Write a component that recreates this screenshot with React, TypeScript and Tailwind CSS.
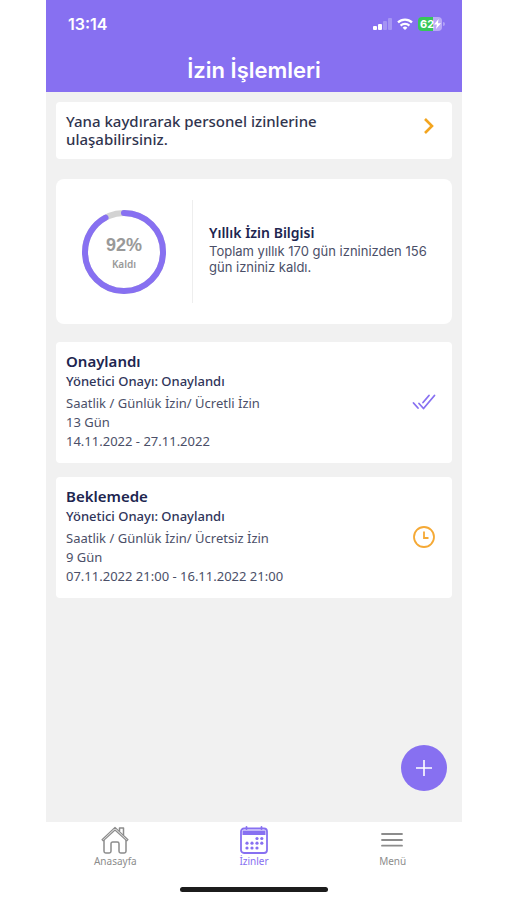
import React from 'react';

interface Leave {
  id: number;
  status: string;
  approval: string;
  type: string;
  duration: string;
  dates: string;
  approved: boolean;
}

const leaves: Leave[] = [
  {
    id: 1,
    status: 'Onaylandı',
    approval: 'Yönetici Onayı: Onaylandı',
    type: 'Saatlik / Günlük İzin/ Ücretli İzin',
    duration: '13 Gün',
    dates: '14.11.2022 - 27.11.2022',
    approved: true,
  },
  {
    id: 2,
    status: 'Beklemede',
    approval: 'Yönetici Onayı: Onaylandı',
    type: 'Saatlik / Günlük İzin/ Ücretsiz İzin',
    duration: '9 Gün',
    dates: '07.11.2022 21:00 - 16.11.2022 21:00',
    approved: false,
  },
];

const StatusBar = () => (
  <div className="flex items-center justify-between pl-[22px] pr-[17px] pt-[14px]">
    <span className="text-base leading-5 font-semibold">13:14</span>
    <div className="flex items-center gap-[5px]">
      <svg width="19" height="12" viewBox="0 0 19 12" fill="#fff">
        <rect x="0" y="8" width="4" height="4" rx="1" />
        <rect x="5" y="6" width="4" height="6" rx="1" />
        <rect x="10" y="3" width="4" height="9" rx="1" opacity="0.25" />
        <rect x="15" y="0" width="4" height="12" rx="1" opacity="0.25" />
      </svg>
      <svg width="16" height="12" viewBox="0 0 16 12" fill="none" stroke="#fff" strokeWidth="2.2">
        <path d="M1 4.4a10 10 0 0 1 14 0" />
        <path d="M3.6 7.6a6.3 6.3 0 0 1 8.8 0" />
        <path d="M8 12 5.6 9.7a3.4 3.4 0 0 1 4.8 0Z" fill="#fff" stroke="none" />
      </svg>
      <div className="flex items-center gap-px">
        <div className="flex h-[14px] w-6 items-center overflow-hidden rounded-[4px] bg-[linear-gradient(90deg,#36c759_62%,#b9a9f7_62%)] pl-[2px]">
          <span className="text-[11px] leading-[14px] font-bold">62</span>
          <svg width="7" height="10" viewBox="0 0 7 10" fill="#fff">
            <path d="M4.6 0 0 5.6h2.9L2 10l5-5.8H3.9Z" />
          </svg>
        </div>
        <span className="h-1 w-[2px] rounded-r bg-white/35" />
      </div>
    </div>
  </div>
);

const BalanceRing = ({ percent }: { percent: number }) => {
  const r = 39;
  const length = 2 * Math.PI * r;
  return (
    <div className="relative size-[86px]">
      <svg width="86" height="86" viewBox="0 0 86 86" fill="none" strokeWidth="6">
        <circle cx="43" cy="43" r={r} stroke="#d3d3d3" />
        <circle
          cx="43"
          cy="43"
          r={r}
          stroke="#8770f1"
          strokeLinecap="round"
          strokeDasharray={`${(length * percent) / 100} ${length}`}
          transform="rotate(-90 43 43)"
        />
      </svg>
      <div className="absolute inset-0 flex flex-col items-center justify-center pt-[2px] text-[#999]">
        <span className="font-['Liberation_Sans',sans-serif] text-lg leading-[22px] font-bold">{percent}%</span>
        <span className="text-[10px] leading-4 font-semibold">Kaldı</span>
      </div>
    </div>
  );
};

const DoubleCheckIcon = () => (
  <svg width="24" height="24" viewBox="0 0 24 24" fill="none" stroke="#8770f1" strokeWidth="1.8" strokeLinecap="round" strokeLinejoin="round">
    <path d="M7 13.5 11.5 18.5 22.5 5.5" />
    <path d="M11 12.5 17 5.5" />
    <path d="M1.5 13 6 18" />
  </svg>
);

const ClockIcon = () => (
  <svg width="24" height="24" viewBox="0 0 24 24" fill="none" stroke="#f5a935" strokeWidth="1.8">
    <circle cx="12" cy="12" r="10" />
    <path d="M12 6.5V13h4.5" />
  </svg>
);

const HomeIcon = () => (
  <svg width="28" height="28" viewBox="0 0 28 28" fill="none" stroke="#8c8c8c" strokeWidth="1.5" strokeLinejoin="round" strokeLinecap="round">
    <path d="M3 14.5v10.8c0 1 .7 1.7 1.7 1.7h3.6c1 0 1.7-.7 1.7-1.7v-7.6c0-1 .7-1.7 1.7-1.7h4.6c1 0 1.7.7 1.7 1.7v7.6c0 1 .7 1.7 1.7 1.7h3.6c1 0 1.7-.7 1.7-1.7V14.5" />
    <path d="M1 13.7 14 1.4l13 12.3-1.2 1.2L14 4 2.2 14.9Z" strokeWidth="1.2" />
    <path d="M18.5 5V2h4v7" />
  </svg>
);

const CalendarIcon = () => (
  <svg width="28" height="28" viewBox="0 0 28 28" fill="none" stroke="#8770f1" strokeWidth="1.8">
    <rect x="1" y="2.5" width="26" height="24.5" rx="3" />
    <path d="M6.5 1v2M21.5 1v2" strokeLinecap="round" />
    <rect x="2.5" y="4.5" width="23" height="4.5" fill="#8770f1" stroke="none" />
    <g fill="#8770f1" stroke="none">
      <circle cx="17" cy="12.5" r="1.6" />
      <circle cx="21.8" cy="12.5" r="1.6" />
      <circle cx="7" cy="17.2" r="1.6" />
      <circle cx="12" cy="17.2" r="1.6" />
      <circle cx="17" cy="17.2" r="1.6" />
      <circle cx="21.8" cy="17.2" r="1.6" />
      <circle cx="7" cy="22" r="1.6" />
      <circle cx="12" cy="22" r="1.6" />
      <circle cx="17" cy="22" r="1.6" />
    </g>
  </svg>
);

const MenuIcon = () => (
  <svg width="28" height="28" viewBox="0 0 28 28" stroke="#8c8c8c" strokeWidth="1.8" strokeLinecap="round">
    <path d="M3 8h20M3 14h20M3 19.7h20" />
  </svg>
);

const LeaveCard = ({ leave }: { leave: Leave }) => (
  <article className="flex items-center justify-between rounded-[4px] bg-white pt-[10px] pr-4 pb-3 pl-[10px] text-[13px] leading-[19px] text-[#4b4f68]">
    <div>
      <h2 className="text-[15px] font-semibold text-[#20254f]">{leave.status}</h2>
      <p className="mb-[3px] leading-5 font-medium text-[#30355a]">{leave.approval}</p>
      <p>{leave.type}</p>
      <p>{leave.duration}</p>
      <p>{leave.dates}</p>
    </div>
    {leave.approved ? <DoubleCheckIcon /> : <ClockIcon />}
  </article>
);

const tabs = [
  { label: 'Anasayfa', icon: <HomeIcon />, active: false },
  { label: 'İzinler', icon: <CalendarIcon />, active: true },
  { label: 'Menü', icon: <MenuIcon />, active: false },
];

export default function App() {
  return (
    <div lang="tr" className="min-h-screen bg-white pr-[45px] pl-[46px] font-['Noto_Sans',sans-serif]">
      <div className="flex min-h-screen flex-col">
        <header className="bg-[#8770f1] pb-[7px] font-['Inter',sans-serif] text-white">
          <StatusBar />
          <h1 className="mt-[21px] text-center text-[22px] leading-[30px] font-semibold">İzin İşlemleri</h1>
        </header>

        <main className="relative flex-1 bg-[#f1f1f1] px-[10px] pt-[10px] pb-20">
          <a href="#personel" className="flex items-start justify-between rounded-[4px] bg-white pt-[10px] pr-4 pb-[11px] pl-[10px]">
            <p className="max-w-[270px] text-[15px] leading-[18px] font-medium text-[#30344e]">
              Yana kaydırarak personel izinlerine ulaşabilirsiniz.
            </p>
            <svg className="mt-[5px]" width="14" height="18" viewBox="0 0 14 18" fill="none" stroke="#f3a51f" strokeWidth="2.6">
              <path d="m3 2 7 7-7 7" />
            </svg>
          </a>

          <section className="mt-5 flex items-center rounded-lg bg-white py-[21px]">
            <div className="flex shrink-0 basis-[136px] justify-center">
              <BalanceRing percent={92} />
            </div>
            <div className="h-[103px] w-px bg-[#eee]" />
            <div className="flex-1 pr-4 pb-[6px] pl-4">
              <h2 className="text-[14px] leading-5 font-semibold text-[#20254f]">Yıllık İzin Bilgisi</h2>
              <p className="font-['Inter',sans-serif] text-[13px] leading-4 text-[#4b4f68]">
                Toplam yıllık 170 gün izninizden 156 gün izniniz kaldı.
              </p>
            </div>
          </section>

          <div className="mt-[18px] flex flex-col gap-[14px]">
            {leaves.map(leave => (
              <LeaveCard key={leave.id} leave={leave} />
            ))}
          </div>

          <button
            aria-label="Yeni izin"
            className="absolute right-[15px] bottom-[31px] flex size-[46px] items-center justify-center rounded-full bg-[#8770f1]"
          >
            <svg width="16" height="16" viewBox="0 0 16 16" stroke="#fff" strokeWidth="1.6">
              <path d="M8 0v16M0 8h16" />
            </svg>
          </button>
        </main>

        <footer className="pt-1 pb-2">
          <nav className="grid grid-cols-3">
            {tabs.map(tab => (
              <button
                key={tab.label}
                className={`flex flex-col items-center text-[10px] leading-[14px] ${tab.active ? 'text-[#8770f1]' : 'text-[#8c8c8c]'}`}
              >
                {tab.icon}
                {tab.label}
              </button>
            ))}
          </nav>
          <div className="mx-auto mt-[19px] h-[5px] w-[148px] rounded-full bg-[#1c1c1c]" />
        </footer>
      </div>
    </div>
  );
}
